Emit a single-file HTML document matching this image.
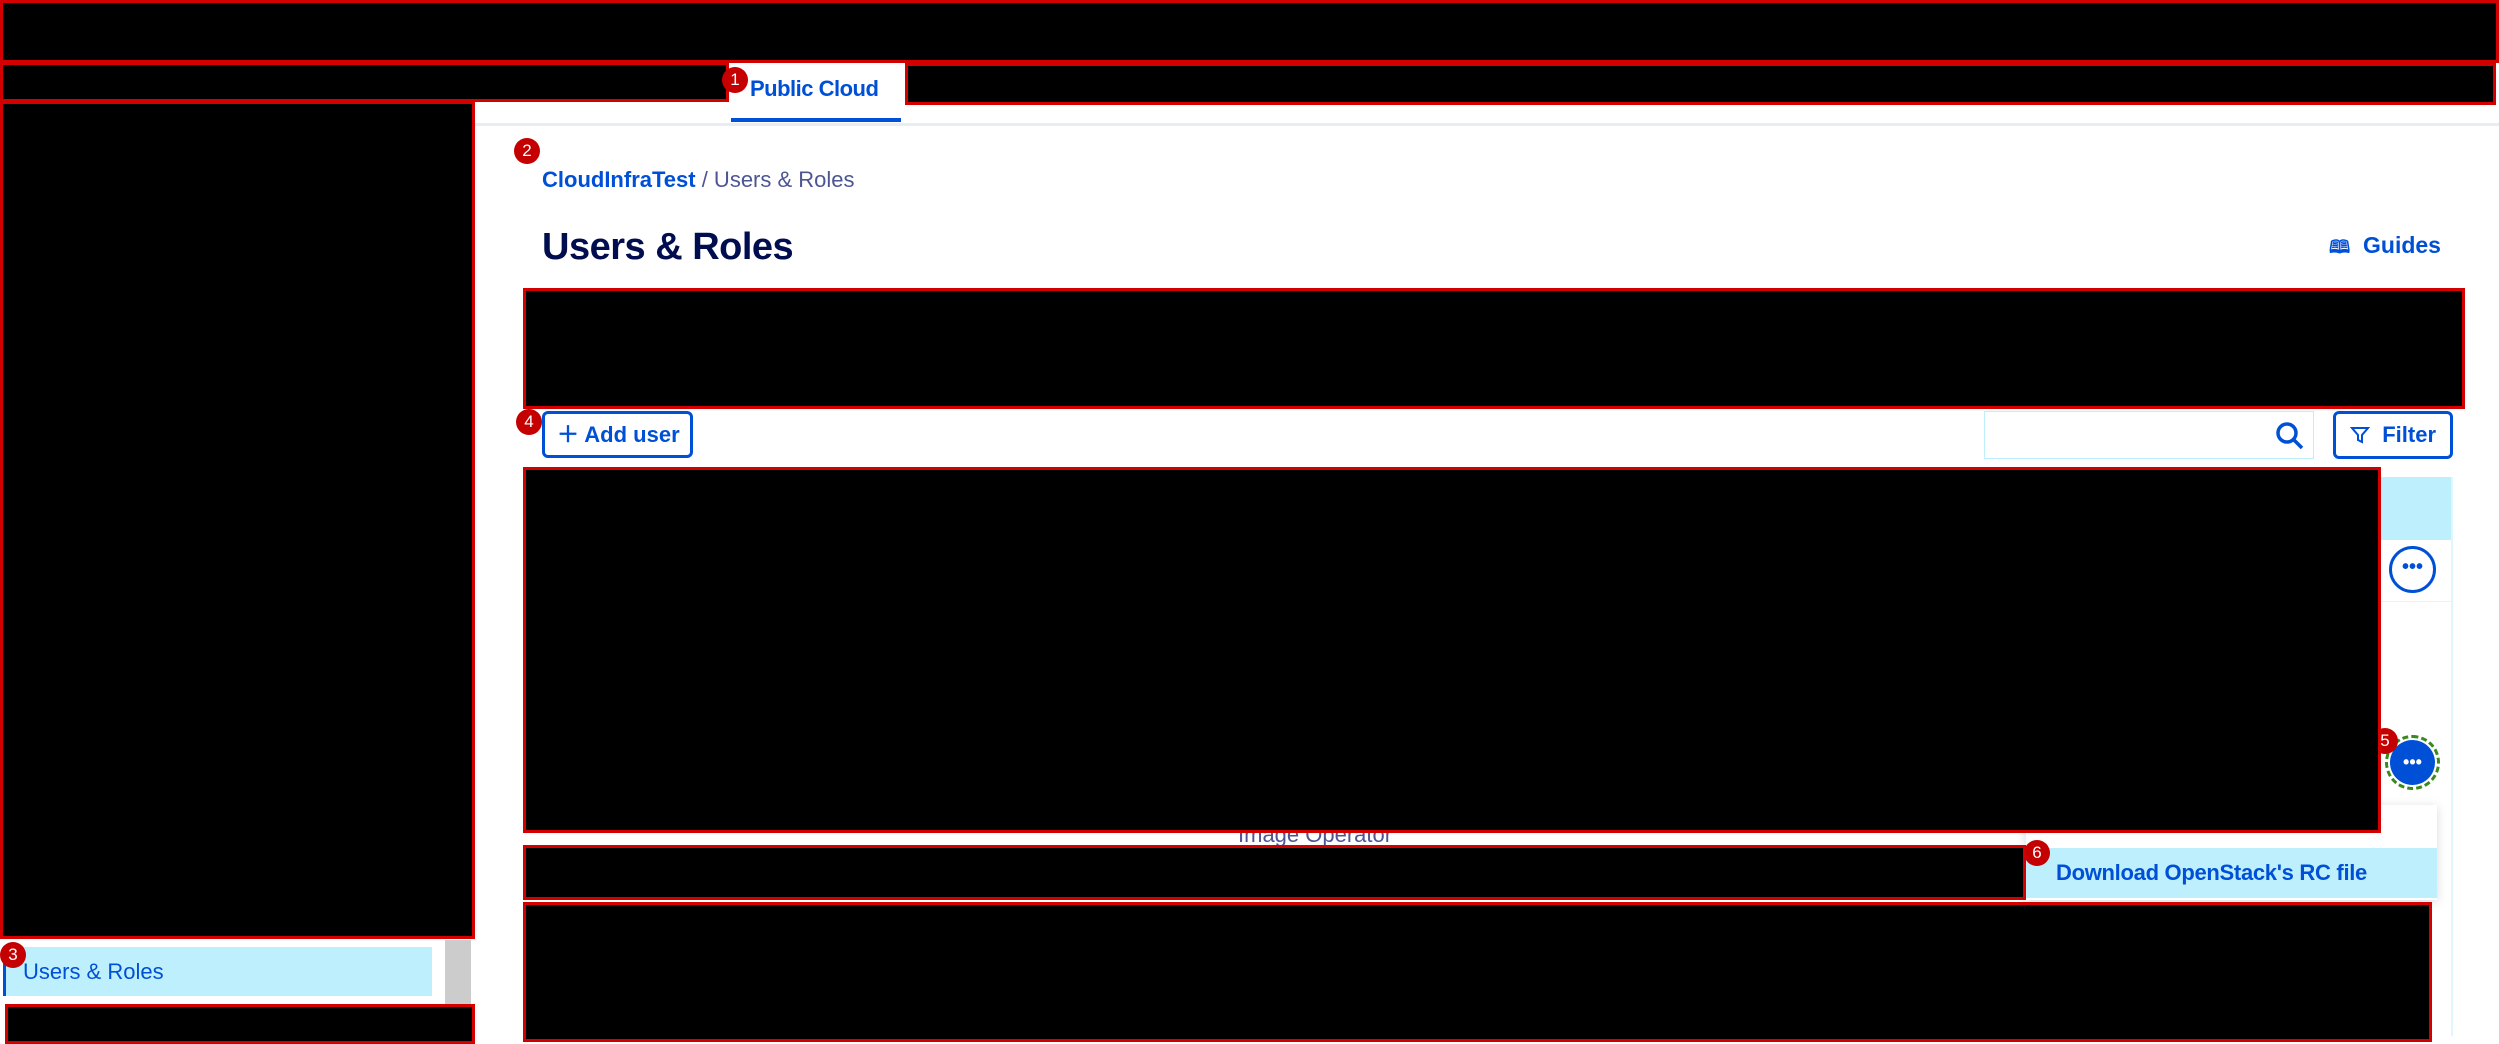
<!DOCTYPE html>
<html><head><meta charset="utf-8"><style>
*{margin:0;padding:0;box-sizing:border-box}
body{width:2499px;height:1036px;position:relative;overflow:hidden;background:#fff;font-family:"Liberation Sans",sans-serif}
.a{position:absolute}
.blk{position:absolute;background:#000;border:3px solid #d40000}
.bd{position:absolute;width:26px;height:26px;border-radius:50%;background:#c40000;color:#fff;font-size:17px;line-height:26px;text-align:center}
.blue{color:#0050d7}
</style></head><body>
<div class="blk" style="left:0;top:0;width:2499px;height:63px"></div>
<div class="a" style="left:0;top:123px;width:2499px;height:3px;background:#e8ecf6"></div>
<div class="blk" style="left:0;top:62px;width:729px;height:40px"></div>
<div class="a blue" style="left:750px;top:76px;font-size:22px;font-weight:bold;letter-spacing:-0.5px">Public Cloud</div>
<div class="a" style="left:731px;top:118px;width:170px;height:4px;background:#0050d7"></div>
<div class="bd" style="left:722px;top:67px">1</div>
<div class="blk" style="left:905px;top:63px;width:1591px;height:42px"></div>

<div class="blk" style="left:0;top:101px;width:475px;height:838px"></div>
<div class="a" style="left:445px;top:940px;width:26px;height:96px;background:#ccc"></div>
<div class="a" style="left:3px;top:947px;width:429px;height:49px;background:#bdeffd;border-left:3px solid #0050d7"></div>
<div class="a blue" style="left:23px;top:959px;font-size:22px">Users &amp; Roles</div>
<div class="bd" style="left:0;top:942px">3</div>
<div class="blk" style="left:5px;top:1004px;width:470px;height:40px"></div>

<div class="bd" style="left:514px;top:138px">2</div>
<div class="a" style="left:542px;top:167px;font-size:22px;color:#4d5693"><span class="blue" style="font-weight:bold">CloudInfraTest</span> / Users &amp; Roles</div>
<div class="a" style="left:542px;top:226px;font-size:38px;font-weight:bold;color:#000e4f;letter-spacing:-0.5px">Users &amp; Roles</div>
<div class="a blue" style="left:2329px;top:232px;font-size:23px;font-weight:bold"><span style="font-size:18px">&#128366;</span>&nbsp; Guides</div>
<div class="blk" style="left:523px;top:288px;width:1942px;height:121px"></div>

<div class="a blue" style="left:542px;top:411px;width:151px;height:47px;border:3px solid #0050d7;border-radius:6px;font-size:22px;font-weight:bold;line-height:41px;padding-left:12px">＋ Add user</div>
<div class="bd" style="left:516px;top:409px">4</div>
<div class="a" style="left:1984px;top:411px;width:330px;height:48px;border:1px solid #bdeffd"></div>
<svg class="a" style="left:2274px;top:420px" width="32" height="32" viewBox="0 0 32 32"><circle cx="13" cy="13" r="9" fill="none" stroke="#0050d7" stroke-width="3.5"/><path d="M19 19L28 28" stroke="#0050d7" stroke-width="3.5"/></svg>
<div class="a blue" style="left:2333px;top:411px;width:120px;height:48px;border:3px solid #0050d7;border-radius:6px;font-size:22px;font-weight:bold;line-height:42px;padding-left:14px"><svg width="20" height="20" viewBox="0 0 20 20" style="vertical-align:-3px"><path d="M2 3H18L12 10V17L8 15V10Z" fill="none" stroke="#0050d7" stroke-width="2"/></svg>&nbsp; Filter</div>

<div class="a" style="left:2380px;top:477px;width:72px;height:63px;background:#bdeffd"></div>
<div class="a" style="left:2451px;top:477px;width:2px;height:559px;background:#dff6fd"></div>
<div class="a" style="left:540px;top:601px;width:1912px;height:1px;background:#dff6fd"></div>
<div class="a" style="left:2389px;top:546px;width:47px;height:47px;border:3px solid #0050d7;border-radius:50%;text-align:center;font-size:20px;line-height:36px;color:#0050d7;font-weight:bold">•••</div>
<div class="a" style="left:2385px;top:735px;width:55px;height:55px;border:3px dashed #3a8a1a;border-radius:50%"></div>
<div class="a" style="left:2390px;top:740px;width:45px;height:45px;background:#0050d7;border-radius:50%;text-align:center;font-size:18px;line-height:45px;color:#fff;font-weight:bold">•••</div>
<div class="bd" style="left:2372px;top:728px">5</div>

<div class="a" style="left:2026px;top:805px;width:411px;height:95px;background:#fff;box-shadow:0 2px 10px rgba(0,0,50,.15)"></div>
<div class="a" style="left:2026px;top:848px;width:411px;height:50px;background:#bdeffd"></div>
<div class="a blue" style="left:2056px;top:860px;font-size:22px;font-weight:bold;letter-spacing:-0.3px">Download OpenStack's RC file</div>
<div class="bd" style="left:2024px;top:840px">6</div>
<div class="a" style="left:1238px;top:822px;font-size:22px;color:#4d5693">Image Operator</div>

<div class="blk" style="left:523px;top:467px;width:1858px;height:366px"></div>
<div class="blk" style="left:523px;top:845px;width:1503px;height:55px"></div>
<div class="blk" style="left:523px;top:902px;width:1909px;height:140px"></div>
</body></html>
